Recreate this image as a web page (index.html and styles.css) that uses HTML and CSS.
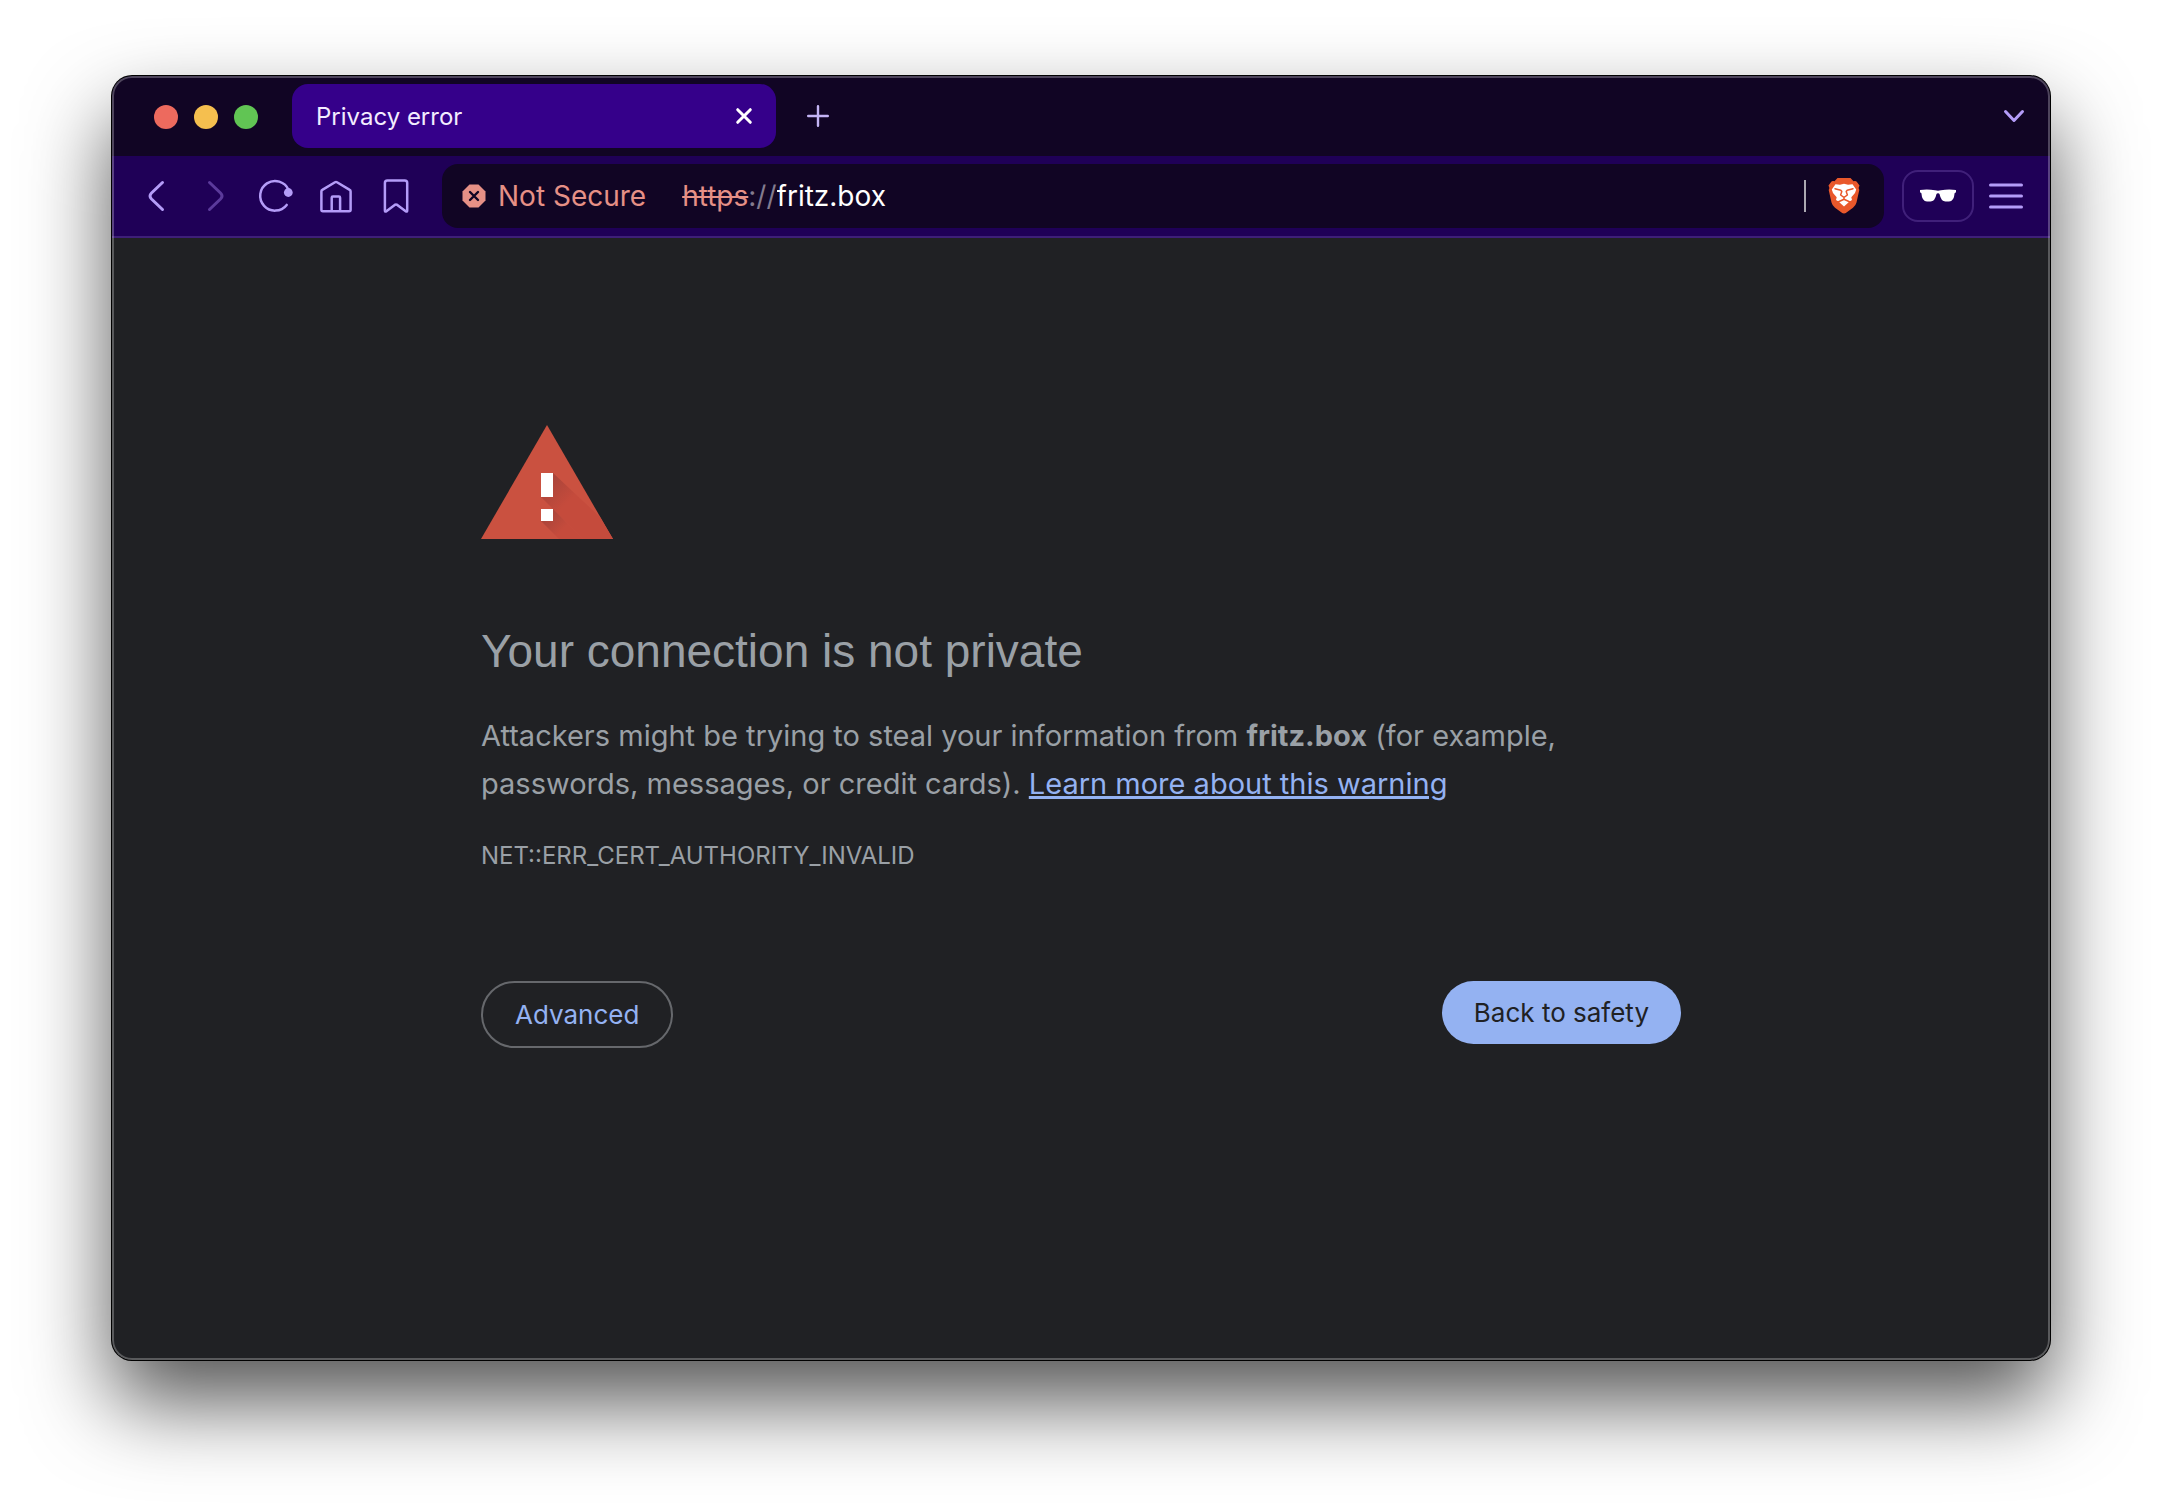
FILE: index.html
```html
<!DOCTYPE html>
<html lang="en">
<head>
<meta charset="utf-8">
<title>Privacy error</title>
<link rel="stylesheet" href="styles.css">
</head>
<body>
<div class="window">
  <header>
    <div class="tab-strip">
      <div class="lights">
        <button class="light light-close" aria-label="Close window"></button>
        <button class="light light-minimize" aria-label="Minimize window"></button>
        <button class="light light-zoom" aria-label="Zoom window"></button>
      </div>
      <div class="tab">
        <span class="tab-title">Privacy error</span>
        <button class="tab-close" aria-label="Close tab">
          <svg width="24" height="24" viewBox="0 0 24 24"><path d="M5.700 5.700 18.300 18.300M18.300 5.700 5.700 18.300"/></svg>
        </button>
      </div>
      <button class="new-tab" aria-label="New tab">
        <svg width="24" height="24" viewBox="0 0 24 24"><path d="M12 2.200V21.800M2.200 12H21.800"/></svg>
      </button>
      <button class="tab-search" aria-label="Search tabs">
        <svg width="24" height="24" viewBox="0 0 24 24"><path d="M3.500 7.500 12 16.500 20.500 7.500"/></svg>
      </button>
    </div>
    <nav class="toolbar" aria-label="Navigation">
      <button class="tool" aria-label="Back">
        <svg width="40" height="40" viewBox="0 0 40 40"><path d="M26.500 6.500 15.500 17Q12.500 20 15.500 23L26.500 33.500"/></svg>
      </button>
      <button class="tool tool-off" aria-label="Forward">
        <svg width="40" height="40" viewBox="0 0 40 40"><path d="M13.500 6.500 24.500 17Q27.500 20 24.500 23L13.500 33.500"/></svg>
      </button>
      <button class="tool" aria-label="Reload">
        <svg width="40" height="40" viewBox="0 0 40 40"><path class="thin" d="M30.700 28.900A14.800 14.800 0 1 1 32.600 14"/><circle class="solid" cx="32.300" cy="16.500" r="4.400"/></svg>
      </button>
      <button class="tool" aria-label="Home">
        <svg width="40" height="40" viewBox="0 0 40 40"><path class="thin" d="M5.400 15.400Q5.400 14.400 6.300 13.900L19 6.200Q20 5.600 21 6.200L33.700 13.900Q34.600 14.400 34.600 15.400V33.700Q34.600 35.200 33.100 35.200H6.900Q5.400 35.200 5.400 33.700ZM15.700 35V21.800Q15.700 20.600 16.900 20.600H22.900Q24.100 20.600 24.100 21.800V35"/></svg>
      </button>
      <button class="tool" aria-label="Bookmark">
        <svg width="40" height="40" viewBox="0 0 40 40"><path class="thin" d="M8.900 7Q8.900 4.500 11.400 4.500H28.700Q31.200 4.500 31.200 7V34.500Q31.200 36.300 29.700 35.200L21.300 28.900Q20 28 18.700 28.900L10.400 35.200Q8.900 36.300 8.900 34.500Z"/></svg>
      </button>
      <div class="address">
        <button class="security">
          <svg width="24" height="24" viewBox="0 0 24 24"><path class="octagon" d="M7.500.500H16.500L23.500 7.500V16.500L16.500 23.500H7.500L.500 16.500V7.500Z"/><path class="cross" d="M8 8 16 16M16 8 8 16"/></svg>
          Not Secure
        </button>
        <label class="scheme" for="url"><del>https</del>://</label>
        <input class="url" id="url" type="text" value="fritz.box" spellcheck="false">
        <span class="divider"></span>
        <button class="shields" aria-label="Brave Shields">
          <svg width="32" height="36" viewBox="0 0 32 36">
            <path fill="#e9582b" d="M9.500 0H22.500L25.500 3.300Q28 2.600 29.300 4.400L31.500 7.500 30.600 10 31.300 12 28.500 24.500Q27.700 27.700 25 29.700L18.500 34.500Q16 36.500 13.500 34.500L7 29.700Q4.300 27.700 3.500 24.500L.700 12 1.400 10 .500 7.500 2.700 4.400Q4 2.600 6.500 3.300Z"/>
            <path fill="#fff" d="M7.500 6.200 12 6.800 16 5.800 20 6.800 24.500 6.200 28.200 11.500 27 15 23.300 19.200 24 22 21.500 23.500 16 28.400 10.500 23.500 8 22 8.700 19.200 5 15 3.800 11.500Z"/>
            <path fill="none" stroke="#e9582b" stroke-width="1.500" d="M7 10.700 12.800 12.200 13.800 13.500 12.600 17 16 19.300 19.400 17 18.200 13.500 19.200 12.200 25 10.700M16 19.300V21.200M10 24 16 21.200 22 24"/>
          </svg>
        </button>
      </div>
      <button class="private" aria-label="Private window">
        <svg width="36" height="14" viewBox="0 0 36 14"><path fill="#fff" d="M0 1Q8 0 15 1.300Q18 2 21 1.300Q28 0 36 1V3.300L34.600 4.300Q34 12.500 29 12.500H25.500Q21 12.500 19.600 5.300Q19.300 4.300 18 4.300Q16.700 4.300 16.400 5.300Q15 12.500 10.500 12.500H7Q2 12.500 1.400 4.300L0 3.300Z"/></svg>
      </button>
      <button class="menu" aria-label="Menu">
        <svg width="36" height="28" viewBox="0 0 36 28"><path d="M2.500 3H33.500M2.500 14H33.500M2.500 25H33.500"/></svg>
      </button>
    </nav>
  </header>
  <main>
    <svg class="warning" width="132" height="114" viewBox="0 0 132 114" role="img" aria-label="Warning">
      <defs>
        <linearGradient id="shade" gradientUnits="userSpaceOnUse" x1="66" y1="54" x2="88" y2="76">
          <stop offset="0" stop-color="#a8443a"/><stop offset="1" stop-color="#c54b3c"/>
        </linearGradient>
        <linearGradient id="shade-dot" gradientUnits="userSpaceOnUse" x1="66" y1="88" x2="82" y2="104">
          <stop offset="0" stop-color="#a8443a"/><stop offset="1" stop-color="#c54b3c"/>
        </linearGradient>
      </defs>
      <path fill="#ca5140" d="M66 0 132 114H0Z"/>
      <path fill="url(#shade)" d="M72 48 119 92 132 114H102L60 72Z"/>
      <path fill="url(#shade-dot)" d="M72 84 102 114H78L60 96Z"/>
      <path fill="#fff" d="M60 48H72V72H60ZM60 84H72V96H60Z"/>
    </svg>
    <h1>Your connection is not private</h1>
    <p class="message">Attackers might be trying to steal your information from <strong>fritz.box</strong> (for example, passwords, messages, or credit cards). <a href="#learn-more">Learn more about this warning</a></p>
    <p class="code">NET::ERR_CERT_AUTHORITY_INVALID</p>
    <div class="actions">
      <button class="advanced">Advanced</button>
      <button class="safety">Back to safety</button>
    </div>
  </main>
</div>
</body>
</html>
```
FILE: styles.css
```css
* {
  box-sizing: border-box;
}

body {
  margin: 0;
  padding: 76px 112px 148px;
  background: #fff;
  font-family: Inter, "Liberation Sans", sans-serif;
}

button {
  display: flex;
  align-items: center;
  justify-content: center;
  flex-shrink: 0;
  padding: 0;
  border: 0;
  background: none;
  color: inherit;
  font: inherit;
}

svg {
  display: block;
  flex-shrink: 0;
}

.window {
  position: relative;
  display: flex;
  flex-direction: column;
  min-height: calc(100vh - 224px);
  overflow: hidden;
  border-radius: 20px;
  background: #202124;
  box-shadow: 0 0 0 1px #000, 0 42px 84px rgba(0, 0, 0, 0.67);
}

/* light hairline inside the window edge */
.window::after {
  content: "";
  position: absolute;
  inset: 0;
  border-radius: 20px;
  box-shadow: inset 0 0 0 2px rgba(255, 255, 255, 0.26);
  pointer-events: none;
}

header svg {
  fill: none;
  stroke: #b49cf8;
  stroke-width: 3;
  stroke-linecap: round;
  stroke-linejoin: round;
}

.tab-strip {
  display: flex;
  align-items: center;
  height: 80px;
  padding: 0 24px 0 42px;
  background: #110524;
}

.lights {
  display: flex;
  gap: 16px;
  padding-top: 2px;
}

.light {
  width: 24px;
  height: 24px;
  border-radius: 50%;
}

.light-close {
  background: #ed6a5e;
}

.light-minimize {
  background: #f5bf4f;
}

.light-zoom {
  background: #61c554;
}

.tab {
  display: flex;
  align-items: center;
  justify-content: space-between;
  width: 484px;
  height: 64px;
  margin-left: 34px;
  padding: 0 20px 0 24px;
  border-radius: 16px;
  background: #35008a;
  color: #f3ecff;
  font-size: 24px;
}

.tab-close svg {
  stroke: #fff;
}

.new-tab {
  margin-left: 30px;
}

.new-tab svg {
  stroke: #c4b4f5;
  stroke-width: 2.4;
}

.tab-search {
  margin-left: auto;
}

.toolbar {
  display: flex;
  align-items: center;
  height: 82px;
  padding: 0 26px 0 14px;
  border-bottom: 2px solid #3e1f78;
  background: #1f0057;
}

.tool {
  width: 60px;
  height: 60px;
}

.tool .thin {
  stroke-width: 2.5;
}

.tool .solid {
  fill: #b49cf8;
  stroke: none;
}

.tool-off svg {
  stroke: #5b3a9b;
}

.address {
  display: flex;
  flex: 1;
  align-items: center;
  min-width: 0;
  height: 64px;
  margin-left: 16px;
  padding: 0 24px 0 20px;
  border-radius: 16px;
  background: #110524;
  font-size: 28px;
}

.security {
  gap: 12px;
  margin-right: 36px;
  color: #e69086;
}

.security .octagon {
  fill: #e69086;
  stroke: none;
}

.security .cross {
  stroke: #110524;
  stroke-width: 2.4;
}

.scheme {
  color: #837b8e;
}

.scheme del {
  color: #e69086;
  text-decoration-thickness: 2px;
}

.url {
  flex: 1;
  min-width: 0;
  padding: 0;
  border: 0;
  outline: 0;
  background: none;
  color: #fff;
  font: inherit;
}

.divider {
  width: 2px;
  height: 32px;
  margin-right: 22px;
  background: #aba8b1;
}

.shields svg,
.private svg {
  stroke: none;
}

.private {
  width: 72px;
  height: 52px;
  margin: 0 14px 0 18px;
  border: 2px solid #40207a;
  border-radius: 16px;
}

main {
  width: 100%;
  max-width: 1200px;
  margin: 0 auto;
  padding: 187px 0 80px;
  color: #9aa0a6;
}

h1 {
  margin: 80px 0 0;
  font-family: "Liberation Sans", Arial, sans-serif;
  font-size: 46px;
  font-weight: 400;
  line-height: 64px;
}

.message {
  margin: 29px 0 0;
  font-size: 29px;
  line-height: 48px;
}

.message a {
  color: #94b2f2;
  text-decoration-thickness: 3px;
}

.code {
  margin: 28px 0 0;
  font-size: 24px;
  line-height: 40px;
}

.actions {
  display: flex;
  align-items: flex-start;
  justify-content: space-between;
  margin-top: 105px;
  font-size: 26px;
}

.advanced {
  height: 67px;
  padding: 0 32px;
  border: 2px solid #66686c;
  border-radius: 34px;
  color: #94b2f2;
}

.safety {
  height: 63px;
  padding: 0 32px;
  border-radius: 32px;
  background: #94b2f2;
  color: #202124;
}
```
